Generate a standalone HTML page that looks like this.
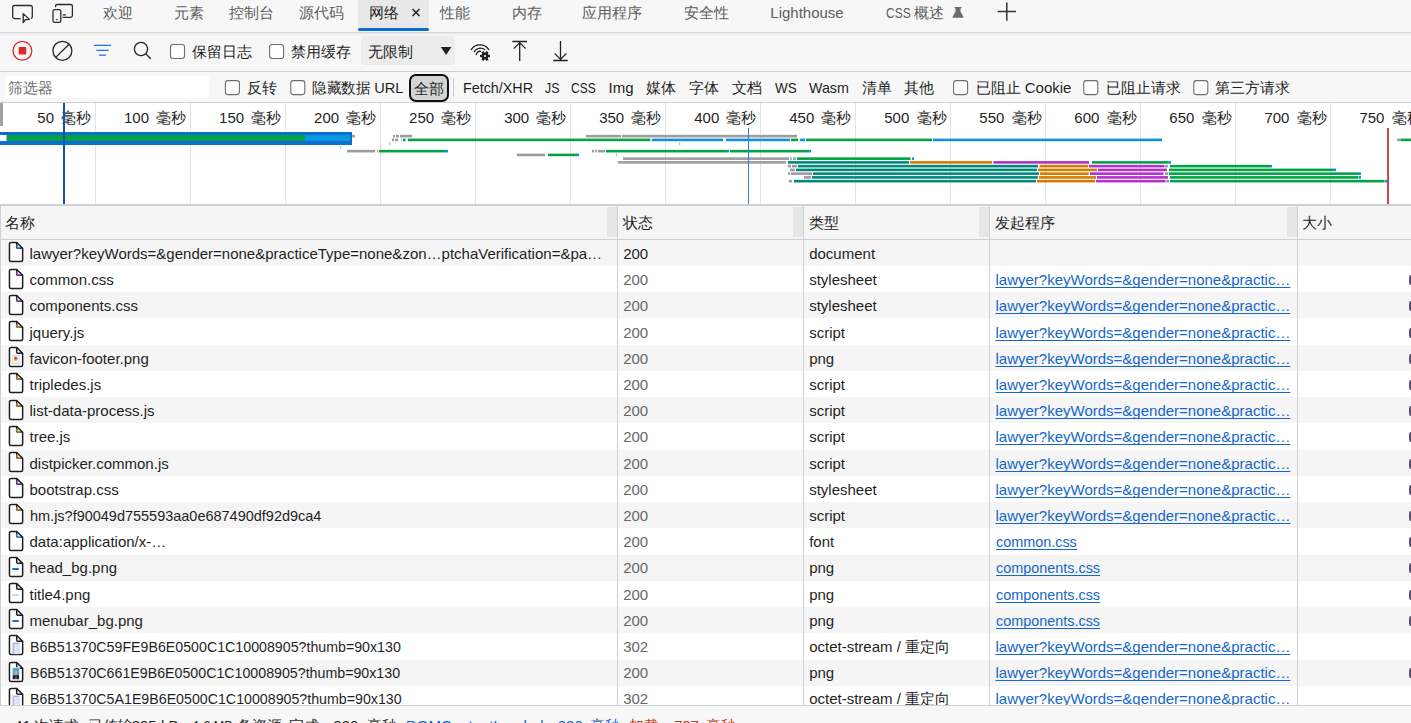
<!DOCTYPE html><html><head><meta charset="utf-8"><style>
html,body{margin:0;padding:0;width:1411px;height:723px;overflow:hidden;background:#fff;}
body{position:relative;font-family:'Liberation Sans', sans-serif;}
.t{position:absolute;white-space:pre;line-height:1;}
.r{position:absolute;}
svg{position:absolute;overflow:visible;}
a{color:inherit;}
</style></head><body>
<div class="r" style="left:0px;top:0px;width:1411.00px;height:32.00px;background:#f7f7f7;"></div>
<div class="r" style="left:0px;top:32px;width:1411.00px;height:1.00px;background:#d6d6d6;"></div>
<div class="r" style="left:0px;top:33px;width:1411.00px;height:3.00px;background:linear-gradient(#e9e9e9,#f7f7f7);"></div>
<div class="r" style="left:358px;top:0px;width:71.00px;height:28.00px;background:#e8e8e8;"></div>
<div class="r" style="left:358px;top:28px;width:71.00px;height:3.00px;background:#0a6ed1;border-radius:1.5px;"></div>
<svg style="left:0;top:0" width="80" height="34"><g fill="none" stroke="#2b2b2b" stroke-width="1.3"><path d="M20.7,18.6 H14.5 a1.8,1.8 0 0 1 -1.8,-1.8 V7.3 a1.8,1.8 0 0 1 1.8,-1.8 H30.5 a1.8,1.8 0 0 1 1.8,1.8 V16.8 a1.8,1.8 0 0 1 -1.2,1.7"/><path d="M23.2,13.6 L29.4,19.4 L25.4,19.6 L23.2,22.6 Z" stroke-linejoin="round"/><path d="M55.5,7.2 V6.3 a1.8,1.8 0 0 1 1.8,-1.8 H70.6 a1.8,1.8 0 0 1 1.8,1.8 V15.5 a1.8,1.8 0 0 1 -1.8,1.8 H62.5"/><rect x="53" y="9.6" width="7.8" height="12.8" rx="1.6"/><path d="M62.8,14.9 H65.8"/><path d="M56.2,19.6 H57.6"/></g></svg>
<div class="t" style="left:885.50px;top:4.72px;font-size:15px;color:#5e5e5e;transform:scaleX(0.8);transform-origin:0 0;">CSS</div>
<div class="t" style="left:102.70px;top:4.72px;font-size:15px;color:#5e5e5e;">欢迎</div>
<div class="t" style="left:174.00px;top:4.72px;font-size:15px;color:#5e5e5e;">元素</div>
<div class="t" style="left:228.80px;top:4.72px;font-size:15px;color:#5e5e5e;">控制台</div>
<div class="t" style="left:298.80px;top:4.72px;font-size:15px;color:#5e5e5e;">源代码</div>
<div class="t" style="left:369.20px;top:4.72px;font-size:15px;color:#1f1f1f;">网络</div>
<div class="t" style="left:440.40px;top:4.72px;font-size:15px;color:#5e5e5e;">性能</div>
<div class="t" style="left:511.50px;top:4.72px;font-size:15px;color:#5e5e5e;">内存</div>
<div class="t" style="left:582.20px;top:4.72px;font-size:15px;color:#5e5e5e;">应用程序</div>
<div class="t" style="left:684.00px;top:4.72px;font-size:15px;color:#5e5e5e;">安全性</div>
<div class="t" style="left:770.30px;top:4.72px;font-size:15px;color:#5e5e5e;">Lighthouse</div>
<div class="t" style="left:913.90px;top:4.72px;font-size:15px;color:#5e5e5e;">概述</div>
<svg style="left:0;top:0" width="1020" height="34"><g stroke="#1f1f1f" stroke-width="1.5" fill="none"><path d="M412.5,9 L419.5,16 M419.5,9 L412.5,16"/></g><path d="M954.5,7 h7 v1.2 h-1 v3.2 l3,5.6 a0.6,0.6 0 0 1 -0.5,0.8 h-10 a0.6,0.6 0 0 1 -0.5,-0.8 l3,-5.6 v-3.2 h-1 z" fill="#6b6b6b"/><g stroke="#333" stroke-width="1.5"><path d="M1006.8,2.5 V20.7 M997.7,11.6 H1016"/></g></svg>
<div class="r" style="left:0px;top:36px;width:1411.00px;height:35.00px;background:#f7f7f7;"></div>
<div class="r" style="left:0px;top:71px;width:1411.00px;height:1.00px;background:#cdd0d4;"></div>
<svg style="left:0;top:0" width="600" height="72"><circle cx="22.4" cy="50.8" r="9.4" fill="none" stroke="#dc2b24" stroke-width="1.3"/><rect x="18.7" y="47" width="7.6" height="7.6" rx="1" fill="#dc2b24"/><g fill="none" stroke="#262626" stroke-width="1.3"><circle cx="62.4" cy="50.8" r="9.5"/><path d="M69,44.2 L55.8,57.4"/><circle cx="141" cy="49" r="6.6"/><path d="M145.8,53.8 L150.8,59"/></g><g stroke="#1a73e8" stroke-width="1.3"><path d="M93.9,45.3 H111.1 M96.4,50.4 H108.6 M98.9,55.2 H106"/></g><rect x="170.5" y="44.5" width="14" height="14" rx="2.5" fill="#fff" stroke="#6e6e6e" stroke-width="1.1"/><rect x="269.6" y="44.5" width="14" height="14" rx="2.5" fill="#fff" stroke="#6e6e6e" stroke-width="1.1"/></svg>
<div class="t" style="left:192.10px;top:44.02px;font-size:15px;color:#1f1f1f;">保留日志</div>
<div class="t" style="left:290.70px;top:44.02px;font-size:15px;color:#1f1f1f;">禁用缓存</div>
<div class="r" style="left:361px;top:36.3px;width:94.00px;height:28.90px;background:#ececec;border-radius:3px;"></div>
<div class="t" style="left:368.20px;top:43.82px;font-size:15px;color:#1f1f1f;">无限制</div>
<svg style="left:0;top:0" width="600" height="72"><path d="M440.8,47 H451.4 L446.1,55 Z" fill="#1f1f1f"/><g fill="none" stroke="#1f1f1f" stroke-width="1.3" stroke-linecap="round"><path d="M471.2,49.6 A10.4,10.4 0 0 1 488.7,49.6"/><path d="M474.2,51.8 A7,7 0 0 1 484.6,49.6"/><path d="M476.3,54.5 A3.7,3.7 0 0 1 480.6,51.3"/></g><g transform="translate(485,56)" fill="#1f1f1f"><circle r="3.4"/><g><rect x="-1.2" y="-5" width="2.4" height="2.4" transform="rotate(30)"/><rect x="-1.2" y="-5" width="2.4" height="2.4" transform="rotate(90)"/><rect x="-1.2" y="-5" width="2.4" height="2.4" transform="rotate(150)"/><rect x="-1.2" y="-5" width="2.4" height="2.4" transform="rotate(210)"/><rect x="-1.2" y="-5" width="2.4" height="2.4" transform="rotate(270)"/><rect x="-1.2" y="-5" width="2.4" height="2.4" transform="rotate(330)"/></g><circle r="1.1" fill="#f7f7f7"/></g><g fill="none" stroke="#1f1f1f" stroke-width="1.3"><path d="M512.4,41.5 H527 M519.7,42.5 V61 M513.8,48.6 L519.7,42.6 L525.6,48.6"/><path d="M553.3,60.5 H567.7 M560.5,41 V59.5 M554.6,53.4 L560.5,59.4 L566.4,53.4"/></g></svg>
<div class="r" style="left:0px;top:72px;width:1411.00px;height:30.00px;background:#f7f7f7;"></div>
<div class="r" style="left:0px;top:102px;width:1411.00px;height:1.00px;background:#cdd0d4;"></div>
<div class="r" style="left:5px;top:76px;width:204.00px;height:21.50px;background:#ffffff;"></div>
<div class="t" style="left:8.20px;top:80.02px;font-size:15px;color:#6e6e6e;">筛选器</div>
<svg style="left:0;top:0" width="1411" height="102"><g fill="#fff" stroke="#6e6e6e" stroke-width="1.1">
<rect x="225.4" y="80.6" width="14" height="14" rx="2.5"/>
<rect x="290.8" y="80.6" width="14" height="14" rx="2.5"/>
<rect x="953.6" y="80.6" width="14" height="14" rx="2.5"/>
<rect x="1083.8" y="80.6" width="14" height="14" rx="2.5"/>
<rect x="1193.8" y="80.6" width="14" height="14" rx="2.5"/>
</g></svg>
<div class="t" style="left:246.70px;top:80.02px;font-size:15px;color:#1f1f1f;">反转</div>
<div class="t" style="left:312.00px;top:80.02px;font-size:15px;color:#1f1f1f;transform:scaleX(0.97);transform-origin:0 0;">隐藏数据 URL</div>
<div class="r" style="left:409px;top:74px;width:40.00px;height:28.00px;background:#d4d4d4;box-sizing:border-box;border:2.2px solid #111;border-radius:7px;"></div>
<div class="t" style="left:413.90px;top:81.02px;font-size:15px;color:#1f1f1f;">全部</div>
<div class="r" style="left:453px;top:77.5px;width:1.00px;height:18.50px;background:#cfcfcf;"></div>
<div class="t" style="left:462.50px;top:80.02px;font-size:15px;color:#1f1f1f;transform:scaleX(0.955);transform-origin:0 0;">Fetch/XHR</div>
<div class="t" style="left:544.50px;top:80.02px;font-size:15px;color:#1f1f1f;transform:scaleX(0.82);transform-origin:0 0;">JS</div>
<div class="t" style="left:570.70px;top:80.02px;font-size:15px;color:#1f1f1f;transform:scaleX(0.8);transform-origin:0 0;">CSS</div>
<div class="t" style="left:608.60px;top:80.02px;font-size:15px;color:#1f1f1f;">Img</div>
<div class="t" style="left:645.80px;top:80.02px;font-size:15px;color:#1f1f1f;">媒体</div>
<div class="t" style="left:688.80px;top:80.02px;font-size:15px;color:#1f1f1f;">字体</div>
<div class="t" style="left:731.90px;top:80.02px;font-size:15px;color:#1f1f1f;">文档</div>
<div class="t" style="left:774.50px;top:80.02px;font-size:15px;color:#1f1f1f;transform:scaleX(0.9);transform-origin:0 0;">WS</div>
<div class="t" style="left:808.90px;top:80.02px;font-size:15px;color:#1f1f1f;transform:scaleX(0.95);transform-origin:0 0;">Wasm</div>
<div class="t" style="left:861.60px;top:80.02px;font-size:15px;color:#1f1f1f;">清单</div>
<div class="t" style="left:904.20px;top:80.02px;font-size:15px;color:#1f1f1f;">其他</div>
<div class="t" style="left:975.60px;top:80.02px;font-size:15px;color:#1f1f1f;">已阻止 Cookie</div>
<div class="t" style="left:1106.20px;top:80.02px;font-size:15px;color:#1f1f1f;">已阻止请求</div>
<div class="t" style="left:1215.10px;top:80.02px;font-size:15px;color:#1f1f1f;">第三方请求</div>
<div class="r" style="left:0px;top:103px;width:1411.00px;height:101.00px;background:#ffffff;"></div>
<div class="r" style="left:0px;top:204px;width:1411.00px;height:1.50px;background:#cdd0d4;"></div>
<div class="r" style="left:95px;top:103px;width:1.00px;height:101.00px;background:#e3e3e3;"></div>
<div class="r" style="left:190px;top:103px;width:1.00px;height:101.00px;background:#e3e3e3;"></div>
<div class="r" style="left:285px;top:103px;width:1.00px;height:101.00px;background:#e3e3e3;"></div>
<div class="r" style="left:380px;top:103px;width:1.00px;height:101.00px;background:#e3e3e3;"></div>
<div class="r" style="left:475px;top:103px;width:1.00px;height:101.00px;background:#e3e3e3;"></div>
<div class="r" style="left:570px;top:103px;width:1.00px;height:101.00px;background:#e3e3e3;"></div>
<div class="r" style="left:665px;top:103px;width:1.00px;height:101.00px;background:#e3e3e3;"></div>
<div class="r" style="left:760px;top:103px;width:1.00px;height:101.00px;background:#e3e3e3;"></div>
<div class="r" style="left:855px;top:103px;width:1.00px;height:101.00px;background:#e3e3e3;"></div>
<div class="r" style="left:950px;top:103px;width:1.00px;height:101.00px;background:#e3e3e3;"></div>
<div class="r" style="left:1045px;top:103px;width:1.00px;height:101.00px;background:#e3e3e3;"></div>
<div class="r" style="left:1140px;top:103px;width:1.00px;height:101.00px;background:#e3e3e3;"></div>
<div class="r" style="left:1235px;top:103px;width:1.00px;height:101.00px;background:#e3e3e3;"></div>
<div class="r" style="left:1330px;top:103px;width:1.00px;height:101.00px;background:#e3e3e3;"></div>
<div class="r" style="left:0px;top:103px;width:3.00px;height:22.50px;background:#a0a0a0;"></div>
<div class="t" style="left:61.23px;top:110.02px;font-size:15px;color:#1f1f1f;">毫秒</div>
<div class="t" style="left:0;width:54.03px;text-align:right;top:110.02px;font-size:15px;color:#1f1f1f;">50</div>
<div class="t" style="left:156.26px;top:110.02px;font-size:15px;color:#1f1f1f;">毫秒</div>
<div class="t" style="left:0;width:149.06px;text-align:right;top:110.02px;font-size:15px;color:#1f1f1f;">100</div>
<div class="t" style="left:251.29px;top:110.02px;font-size:15px;color:#1f1f1f;">毫秒</div>
<div class="t" style="left:0;width:244.09px;text-align:right;top:110.02px;font-size:15px;color:#1f1f1f;">150</div>
<div class="t" style="left:346.32px;top:110.02px;font-size:15px;color:#1f1f1f;">毫秒</div>
<div class="t" style="left:0;width:339.12px;text-align:right;top:110.02px;font-size:15px;color:#1f1f1f;">200</div>
<div class="t" style="left:441.35px;top:110.02px;font-size:15px;color:#1f1f1f;">毫秒</div>
<div class="t" style="left:0;width:434.15px;text-align:right;top:110.02px;font-size:15px;color:#1f1f1f;">250</div>
<div class="t" style="left:536.38px;top:110.02px;font-size:15px;color:#1f1f1f;">毫秒</div>
<div class="t" style="left:0;width:529.18px;text-align:right;top:110.02px;font-size:15px;color:#1f1f1f;">300</div>
<div class="t" style="left:631.41px;top:110.02px;font-size:15px;color:#1f1f1f;">毫秒</div>
<div class="t" style="left:0;width:624.21px;text-align:right;top:110.02px;font-size:15px;color:#1f1f1f;">350</div>
<div class="t" style="left:726.44px;top:110.02px;font-size:15px;color:#1f1f1f;">毫秒</div>
<div class="t" style="left:0;width:719.24px;text-align:right;top:110.02px;font-size:15px;color:#1f1f1f;">400</div>
<div class="t" style="left:821.47px;top:110.02px;font-size:15px;color:#1f1f1f;">毫秒</div>
<div class="t" style="left:0;width:814.27px;text-align:right;top:110.02px;font-size:15px;color:#1f1f1f;">450</div>
<div class="t" style="left:916.50px;top:110.02px;font-size:15px;color:#1f1f1f;">毫秒</div>
<div class="t" style="left:0;width:909.30px;text-align:right;top:110.02px;font-size:15px;color:#1f1f1f;">500</div>
<div class="t" style="left:1011.53px;top:110.02px;font-size:15px;color:#1f1f1f;">毫秒</div>
<div class="t" style="left:0;width:1004.33px;text-align:right;top:110.02px;font-size:15px;color:#1f1f1f;">550</div>
<div class="t" style="left:1106.56px;top:110.02px;font-size:15px;color:#1f1f1f;">毫秒</div>
<div class="t" style="left:0;width:1099.36px;text-align:right;top:110.02px;font-size:15px;color:#1f1f1f;">600</div>
<div class="t" style="left:1201.59px;top:110.02px;font-size:15px;color:#1f1f1f;">毫秒</div>
<div class="t" style="left:0;width:1194.39px;text-align:right;top:110.02px;font-size:15px;color:#1f1f1f;">650</div>
<div class="t" style="left:1296.62px;top:110.02px;font-size:15px;color:#1f1f1f;">毫秒</div>
<div class="t" style="left:0;width:1289.42px;text-align:right;top:110.02px;font-size:15px;color:#1f1f1f;">700</div>
<div class="t" style="left:1391.65px;top:110.02px;font-size:15px;color:#1f1f1f;">毫秒</div>
<div class="t" style="left:0;width:1384.45px;text-align:right;top:110.02px;font-size:15px;color:#1f1f1f;">750</div>
<svg style="left:0;top:0" width="1411" height="204"><rect x="352" y="134.85" width="3.00" height="2.6" fill="#9d9d9d"/><rect x="393" y="134.85" width="2.00" height="2.6" fill="#9d9d9d"/><rect x="396" y="134.85" width="3.00" height="2.6" fill="#9d9d9d"/><rect x="400" y="134.85" width="12.00" height="2.6" fill="#9d9d9d"/><rect x="586" y="134.85" width="35.00" height="2.6" fill="#9d9d9d"/><rect x="622" y="134.85" width="175.00" height="2.6" fill="#9d9d9d"/><rect x="392" y="138.60" width="2.00" height="2.6" fill="#9d9d9d"/><rect x="395" y="138.60" width="3.00" height="2.6" fill="#9d9d9d"/><rect x="401" y="138.60" width="1.00" height="2.6" fill="#9fd2f5"/><rect x="403" y="138.60" width="2.50" height="2.6" fill="#00a346"/><rect x="408" y="138.60" width="242.40" height="2.6" fill="#00a346"/><rect x="652" y="138.60" width="71.00" height="2.6" fill="#0c93e0"/><rect x="726" y="138.60" width="64.00" height="2.6" fill="#0c93e0"/><rect x="791" y="138.60" width="7.00" height="2.6" fill="#00a346"/><rect x="800" y="138.60" width="5.00" height="2.6" fill="#0c93e0"/><rect x="806" y="138.60" width="126.00" height="2.6" fill="#00a346"/><rect x="933" y="138.60" width="229.00" height="2.6" fill="#0c93e0"/><rect x="1397" y="138.60" width="4.00" height="2.6" fill="#9d9d9d"/><rect x="1401" y="138.60" width="10.00" height="2.6" fill="#00a346"/><rect x="347" y="149.85" width="28.00" height="2.6" fill="#9d9d9d"/><rect x="377" y="149.85" width="1.00" height="2.6" fill="#9d9d9d"/><rect x="379" y="149.85" width="66.00" height="2.6" fill="#00a346"/><rect x="445" y="149.85" width="3.00" height="2.6" fill="#0c93e0"/><rect x="592" y="149.85" width="2.00" height="2.6" fill="#9d9d9d"/><rect x="595" y="149.85" width="2.00" height="2.6" fill="#9d9d9d"/><rect x="598" y="149.85" width="7.00" height="2.6" fill="#9d9d9d"/><rect x="606" y="149.85" width="121.00" height="2.6" fill="#00a346"/><rect x="727" y="149.85" width="2.00" height="2.6" fill="#0c93e0"/><rect x="730" y="149.85" width="78.00" height="2.6" fill="#00a346"/><rect x="808" y="149.85" width="3.00" height="2.6" fill="#0c93e0"/><rect x="517" y="153.60" width="28.00" height="2.6" fill="#9d9d9d"/><rect x="548" y="153.60" width="29.00" height="2.6" fill="#00a346"/><rect x="577" y="153.60" width="2.00" height="2.6" fill="#0c93e0"/><rect x="623" y="157.35" width="166.00" height="2.6" fill="#9d9d9d"/><rect x="790" y="157.35" width="2.00" height="2.6" fill="#9d9d9d"/><rect x="793" y="157.35" width="3.00" height="2.6" fill="#9d9d9d"/><rect x="797" y="157.35" width="113.50" height="2.6" fill="#00a346"/><rect x="912" y="157.35" width="2.00" height="2.6" fill="#0c93e0"/><rect x="618" y="161.10" width="168.00" height="2.6" fill="#9d9d9d"/><rect x="788" y="161.10" width="121.00" height="2.6" fill="#00897b"/><rect x="910" y="161.10" width="82.00" height="2.6" fill="#d77a00"/><rect x="993.5" y="161.10" width="95.50" height="2.6" fill="#b52fcb"/><rect x="1092" y="161.10" width="76.00" height="2.6" fill="#00a346"/><rect x="1168" y="161.10" width="3.00" height="2.6" fill="#0c93e0"/><rect x="788" y="164.85" width="3.00" height="2.6" fill="#9d9d9d"/><rect x="792" y="164.85" width="5.00" height="2.6" fill="#9d9d9d"/><rect x="798" y="164.85" width="240.00" height="2.6" fill="#00897b"/><rect x="1039.6" y="164.85" width="48.40" height="2.6" fill="#d77a00"/><rect x="1089" y="164.85" width="75.50" height="2.6" fill="#b52fcb"/><rect x="1165" y="164.85" width="3.00" height="2.6" fill="#9d9d9d"/><rect x="1170" y="164.85" width="100.00" height="2.6" fill="#00a346"/><rect x="1270" y="164.85" width="2.00" height="2.6" fill="#0c93e0"/><rect x="790" y="168.60" width="5.00" height="2.6" fill="#9d9d9d"/><rect x="796" y="168.60" width="241.00" height="2.6" fill="#00897b"/><rect x="1038" y="168.60" width="59.00" height="2.6" fill="#d77a00"/><rect x="1098" y="168.60" width="69.00" height="2.6" fill="#b52fcb"/><rect x="1169" y="168.60" width="164.00" height="2.6" fill="#00a346"/><rect x="1333" y="168.60" width="3.00" height="2.6" fill="#0c93e0"/><rect x="788" y="172.35" width="2.00" height="2.6" fill="#9d9d9d"/><rect x="791" y="172.35" width="21.00" height="2.6" fill="#9d9d9d"/><rect x="813" y="172.35" width="226.00" height="2.6" fill="#00897b"/><rect x="1040" y="172.35" width="48.70" height="2.6" fill="#d77a00"/><rect x="1090" y="172.35" width="73.50" height="2.6" fill="#b52fcb"/><rect x="1165" y="172.35" width="3.00" height="2.6" fill="#9d9d9d"/><rect x="1169" y="172.35" width="190.00" height="2.6" fill="#00a346"/><rect x="1359" y="172.35" width="2.00" height="2.6" fill="#0c93e0"/><rect x="804" y="176.10" width="7.00" height="2.6" fill="#9d9d9d"/><rect x="812" y="176.10" width="226.00" height="2.6" fill="#00897b"/><rect x="1039" y="176.10" width="57.00" height="2.6" fill="#d77a00"/><rect x="1097" y="176.10" width="71.00" height="2.6" fill="#b52fcb"/><rect x="1170" y="176.10" width="188.50" height="2.6" fill="#00a346"/><rect x="1359" y="176.10" width="2.00" height="2.6" fill="#0c93e0"/><rect x="789" y="179.85" width="3.00" height="2.6" fill="#9d9d9d"/><rect x="794" y="179.85" width="242.00" height="2.6" fill="#00897b"/><rect x="1037" y="179.85" width="58.00" height="2.6" fill="#d77a00"/><rect x="1096" y="179.85" width="69.50" height="2.6" fill="#b52fcb"/><rect x="1166" y="179.85" width="3.00" height="2.6" fill="#9d9d9d"/><rect x="1170" y="179.85" width="214.60" height="2.6" fill="#00a346"/><rect x="1385" y="179.85" width="2.00" height="2.6" fill="#0c93e0"/><rect x="389" y="142.15" width="1.3" height="3" fill="#9fd2f5"/><rect x="340" y="145.90" width="1.3" height="3" fill="#9fd2f5"/><rect x="616" y="153.40" width="1.3" height="3" fill="#9fd2f5"/><rect x="679" y="142.15" width="1.3" height="3" fill="#9fd2f5"/><rect x="790" y="157.15" width="1.3" height="3" fill="#9fd2f5"/></svg>
<div class="r" style="left:0px;top:132.2px;width:352.00px;height:12.60px;background:#0b6fd0;"></div>
<div class="r" style="left:0px;top:134.7px;width:6.00px;height:6.40px;background:#ffffff;"></div>
<div class="r" style="left:6px;top:134.7px;width:1.00px;height:6.40px;background:#b0b0b0;"></div>
<div class="r" style="left:7px;top:134.7px;width:297.70px;height:6.40px;background:#00a346;"></div>
<div class="r" style="left:304.7px;top:134.7px;width:45.30px;height:6.40px;background:#0a98e0;"></div>
<div class="r" style="left:63px;top:103px;width:2.00px;height:101.00px;background:#1a4fb5;"></div>
<div class="r" style="left:747.6px;top:128px;width:1.60px;height:76.00px;background:#2f7fe0;"></div>
<div class="r" style="left:1387px;top:128px;width:2.00px;height:76.00px;background:#c9494a;"></div>
<div class="r" style="left:0px;top:205.5px;width:1411.00px;height:33.50px;background:#f5f5f5;"></div>
<div class="r" style="left:0px;top:239px;width:1411.00px;height:1.00px;background:#cdd0d4;"></div>
<div class="r" style="left:607px;top:207px;width:10.00px;height:29.60px;background:#e6e6e6;"></div>
<div class="r" style="left:793px;top:207px;width:10.00px;height:29.60px;background:#e6e6e6;"></div>
<div class="r" style="left:979px;top:207px;width:10.00px;height:29.60px;background:#e6e6e6;"></div>
<div class="r" style="left:1287px;top:207px;width:10.00px;height:29.60px;background:#e6e6e6;"></div>
<div class="t" style="left:5.30px;top:214.93px;font-size:15px;color:#1f1f1f;">名称</div>
<div class="t" style="left:623.20px;top:214.93px;font-size:15px;color:#1f1f1f;">状态</div>
<div class="t" style="left:809.20px;top:214.93px;font-size:15px;color:#1f1f1f;">类型</div>
<div class="t" style="left:994.70px;top:214.93px;font-size:15px;color:#1f1f1f;">发起程序</div>
<div class="t" style="left:1302.20px;top:214.93px;font-size:15px;color:#1f1f1f;">大小</div>
<div class="r" style="left:0px;top:239.5px;width:1411.00px;height:26.25px;background:#f5f5f5;"></div>
<div class="r" style="left:0px;top:265.75px;width:1411.00px;height:26.25px;background:#ffffff;"></div>
<div class="r" style="left:0px;top:292.0px;width:1411.00px;height:26.25px;background:#f5f5f5;"></div>
<div class="r" style="left:0px;top:318.25px;width:1411.00px;height:26.25px;background:#ffffff;"></div>
<div class="r" style="left:0px;top:344.5px;width:1411.00px;height:26.25px;background:#f5f5f5;"></div>
<div class="r" style="left:0px;top:370.75px;width:1411.00px;height:26.25px;background:#ffffff;"></div>
<div class="r" style="left:0px;top:397.0px;width:1411.00px;height:26.25px;background:#f5f5f5;"></div>
<div class="r" style="left:0px;top:423.25px;width:1411.00px;height:26.25px;background:#ffffff;"></div>
<div class="r" style="left:0px;top:449.5px;width:1411.00px;height:26.25px;background:#f5f5f5;"></div>
<div class="r" style="left:0px;top:475.75px;width:1411.00px;height:26.25px;background:#ffffff;"></div>
<div class="r" style="left:0px;top:502.0px;width:1411.00px;height:26.25px;background:#f5f5f5;"></div>
<div class="r" style="left:0px;top:528.25px;width:1411.00px;height:26.25px;background:#ffffff;"></div>
<div class="r" style="left:0px;top:554.5px;width:1411.00px;height:26.25px;background:#f5f5f5;"></div>
<div class="r" style="left:0px;top:580.75px;width:1411.00px;height:26.25px;background:#ffffff;"></div>
<div class="r" style="left:0px;top:607.0px;width:1411.00px;height:26.25px;background:#f5f5f5;"></div>
<div class="r" style="left:0px;top:633.25px;width:1411.00px;height:26.25px;background:#ffffff;"></div>
<div class="r" style="left:0px;top:659.5px;width:1411.00px;height:26.25px;background:#f5f5f5;"></div>
<div class="r" style="left:0px;top:685.75px;width:1411.00px;height:26.25px;background:#ffffff;"></div>
<div class="r" style="left:0px;top:205.5px;width:1.20px;height:499.50px;background:#cdd0d4;"></div>
<div class="r" style="left:617px;top:205.5px;width:1.10px;height:499.50px;background:#cdd0d4;"></div>
<div class="r" style="left:803px;top:205.5px;width:1.10px;height:499.50px;background:#cdd0d4;"></div>
<div class="r" style="left:989px;top:205.5px;width:1.10px;height:499.50px;background:#cdd0d4;"></div>
<div class="r" style="left:1297px;top:205.5px;width:1.10px;height:499.50px;background:#cdd0d4;"></div>
<svg style="left:8px;top:242.40px" width="17" height="21" viewBox="0 0 17 21"><path d="M2.9,0.4 H8.7 L14.65,6.35 V17.9 A1.5,1.5 0 0 1 13.15,19.4 H2.95 A1.5,1.5 0 0 1 1.45,17.9 V1.9 A1.5,1.5 0 0 1 2.95,0.4 Z" fill="#fff" stroke="#fff" stroke-width="3" opacity="0.9"/><path d="M2.9,0.4 H8.7 L14.65,6.35 V17.9 A1.5,1.5 0 0 1 13.15,19.4 H2.95 A1.5,1.5 0 0 1 1.45,17.9 V1.9 A1.5,1.5 0 0 1 2.95,0.4 Z" fill="#fefefe" stroke="#1e1e1e" stroke-width="1.5"/><path d="M8.7,0.4 V5.1 A1.25,1.25 0 0 0 9.95,6.35 H14.65" fill="none" stroke="#1e1e1e" stroke-width="1.5"/><path d="M8.7,2.4 V5.1 A1.25,1.25 0 0 0 9.95,6.35 H13.4" fill="none" stroke="#2f6fd6" stroke-width="1.2" opacity="0.7"/></svg>
<div class="t" style="left:29.50px;top:246.00px;font-size:15px;color:#1f1f1f;">lawyer?keyWords=&gender=none&practiceType=none&zon…ptchaVerification=&pa…</div>
<div class="t" style="left:623.20px;top:246.00px;font-size:15px;color:#1f1f1f;">200</div>
<div class="t" style="left:809.20px;top:246.00px;font-size:15px;color:#1f1f1f;">document</div>
<svg style="left:8px;top:268.60px" width="17" height="21" viewBox="0 0 17 21"><path d="M2.9,0.4 H8.7 L14.65,6.35 V17.9 A1.5,1.5 0 0 1 13.15,19.4 H2.95 A1.5,1.5 0 0 1 1.45,17.9 V1.9 A1.5,1.5 0 0 1 2.95,0.4 Z" fill="#fff" stroke="#fff" stroke-width="3" opacity="0.9"/><path d="M2.9,0.4 H8.7 L14.65,6.35 V17.9 A1.5,1.5 0 0 1 13.15,19.4 H2.95 A1.5,1.5 0 0 1 1.45,17.9 V1.9 A1.5,1.5 0 0 1 2.95,0.4 Z" fill="#fefefe" stroke="#1e1e1e" stroke-width="1.5"/><path d="M8.7,0.4 V5.1 A1.25,1.25 0 0 0 9.95,6.35 H14.65" fill="none" stroke="#1e1e1e" stroke-width="1.5"/><path d="M8.7,2.4 V5.1 A1.25,1.25 0 0 0 9.95,6.35 H13.4" fill="none" stroke="#8a3ad6" stroke-width="1.2" opacity="0.7"/></svg>
<div class="t" style="left:29.50px;top:272.00px;font-size:15px;color:#1f1f1f;">common.css</div>
<div class="t" style="left:623.20px;top:272.00px;font-size:15px;color:#666666;">200</div>
<div class="t" style="left:809.20px;top:272.00px;font-size:15px;color:#1f1f1f;">stylesheet</div>
<div class="t" style="left:995.5px;top:272.00px;font-size:15px;color:#1567c8;text-decoration:underline;text-decoration-skip-ink:none;text-underline-offset:2px;">lawyer?keyWords=&gender=none&practic…</div>
<div class="r" style="left:1409.3px;top:275.27px;width:3px;height:9.6px;border-radius:50%/40%;background:#4a3f5a;opacity:0.9"></div>
<svg style="left:8px;top:294.80px" width="17" height="21" viewBox="0 0 17 21"><path d="M2.9,0.4 H8.7 L14.65,6.35 V17.9 A1.5,1.5 0 0 1 13.15,19.4 H2.95 A1.5,1.5 0 0 1 1.45,17.9 V1.9 A1.5,1.5 0 0 1 2.95,0.4 Z" fill="#fff" stroke="#fff" stroke-width="3" opacity="0.9"/><path d="M2.9,0.4 H8.7 L14.65,6.35 V17.9 A1.5,1.5 0 0 1 13.15,19.4 H2.95 A1.5,1.5 0 0 1 1.45,17.9 V1.9 A1.5,1.5 0 0 1 2.95,0.4 Z" fill="#fefefe" stroke="#1e1e1e" stroke-width="1.5"/><path d="M8.7,0.4 V5.1 A1.25,1.25 0 0 0 9.95,6.35 H14.65" fill="none" stroke="#1e1e1e" stroke-width="1.5"/><path d="M8.7,2.4 V5.1 A1.25,1.25 0 0 0 9.95,6.35 H13.4" fill="none" stroke="#8a3ad6" stroke-width="1.2" opacity="0.7"/></svg>
<div class="t" style="left:29.50px;top:298.00px;font-size:15px;color:#1f1f1f;">components.css</div>
<div class="t" style="left:623.20px;top:298.00px;font-size:15px;color:#666666;">200</div>
<div class="t" style="left:809.20px;top:298.00px;font-size:15px;color:#1f1f1f;">stylesheet</div>
<div class="t" style="left:995.5px;top:298.00px;font-size:15px;color:#1567c8;text-decoration:underline;text-decoration-skip-ink:none;text-underline-offset:2px;">lawyer?keyWords=&gender=none&practic…</div>
<div class="r" style="left:1409.3px;top:301.27px;width:3px;height:9.6px;border-radius:50%/40%;background:#4a3f5a;opacity:0.9"></div>
<svg style="left:8px;top:321.00px" width="17" height="21" viewBox="0 0 17 21"><path d="M2.9,0.4 H8.7 L14.65,6.35 V17.9 A1.5,1.5 0 0 1 13.15,19.4 H2.95 A1.5,1.5 0 0 1 1.45,17.9 V1.9 A1.5,1.5 0 0 1 2.95,0.4 Z" fill="#fff" stroke="#fff" stroke-width="3" opacity="0.9"/><path d="M2.9,0.4 H8.7 L14.65,6.35 V17.9 A1.5,1.5 0 0 1 13.15,19.4 H2.95 A1.5,1.5 0 0 1 1.45,17.9 V1.9 A1.5,1.5 0 0 1 2.95,0.4 Z" fill="#fefefe" stroke="#1e1e1e" stroke-width="1.5"/><path d="M8.7,0.4 V5.1 A1.25,1.25 0 0 0 9.95,6.35 H14.65" fill="none" stroke="#1e1e1e" stroke-width="1.5"/><path d="M8.7,2.4 V5.1 A1.25,1.25 0 0 0 9.95,6.35 H13.4" fill="none" stroke="#d39a1a" stroke-width="1.2" opacity="0.7"/></svg>
<div class="t" style="left:29.50px;top:325.00px;font-size:15px;color:#1f1f1f;">jquery.js</div>
<div class="t" style="left:623.20px;top:325.00px;font-size:15px;color:#666666;">200</div>
<div class="t" style="left:809.20px;top:325.00px;font-size:15px;color:#1f1f1f;">script</div>
<div class="t" style="left:995.5px;top:325.00px;font-size:15px;color:#1567c8;text-decoration:underline;text-decoration-skip-ink:none;text-underline-offset:2px;">lawyer?keyWords=&gender=none&practic…</div>
<div class="r" style="left:1409.3px;top:328.27px;width:3px;height:9.6px;border-radius:50%/40%;background:#4a3f5a;opacity:0.9"></div>
<svg style="left:8px;top:347.20px" width="17" height="21" viewBox="0 0 17 21"><path d="M2.9,0.4 H8.7 L14.65,6.35 V17.9 A1.5,1.5 0 0 1 13.15,19.4 H2.95 A1.5,1.5 0 0 1 1.45,17.9 V1.9 A1.5,1.5 0 0 1 2.95,0.4 Z" fill="#fff" stroke="#fff" stroke-width="3" opacity="0.9"/><path d="M2.9,0.4 H8.7 L14.65,6.35 V17.9 A1.5,1.5 0 0 1 13.15,19.4 H2.95 A1.5,1.5 0 0 1 1.45,17.9 V1.9 A1.5,1.5 0 0 1 2.95,0.4 Z" fill="#fefefe" stroke="#1e1e1e" stroke-width="1.5"/><path d="M8.7,0.4 V5.1 A1.25,1.25 0 0 0 9.95,6.35 H14.65" fill="none" stroke="#1e1e1e" stroke-width="1.5"/><rect x="4.3" y="8.3" width="6.8" height="8.2" fill="#fff" stroke="#c9cdd6" stroke-width="0.9"/><circle cx="7.7" cy="11.3" r="1.7" fill="#d5402c"/><path d="M5.6,12.3 Q7.7,16.2 9.8,12.3 Z" fill="#e7b04a"/></svg>
<div class="t" style="left:29.50px;top:351.00px;font-size:15px;color:#1f1f1f;">favicon-footer.png</div>
<div class="t" style="left:623.20px;top:351.00px;font-size:15px;color:#666666;">200</div>
<div class="t" style="left:809.20px;top:351.00px;font-size:15px;color:#1f1f1f;">png</div>
<div class="t" style="left:995.5px;top:351.00px;font-size:15px;color:#1567c8;text-decoration:underline;text-decoration-skip-ink:none;text-underline-offset:2px;">lawyer?keyWords=&gender=none&practic…</div>
<div class="r" style="left:1409.3px;top:354.27px;width:3px;height:9.6px;border-radius:50%/40%;background:#4a3f5a;opacity:0.9"></div>
<svg style="left:8px;top:373.40px" width="17" height="21" viewBox="0 0 17 21"><path d="M2.9,0.4 H8.7 L14.65,6.35 V17.9 A1.5,1.5 0 0 1 13.15,19.4 H2.95 A1.5,1.5 0 0 1 1.45,17.9 V1.9 A1.5,1.5 0 0 1 2.95,0.4 Z" fill="#fff" stroke="#fff" stroke-width="3" opacity="0.9"/><path d="M2.9,0.4 H8.7 L14.65,6.35 V17.9 A1.5,1.5 0 0 1 13.15,19.4 H2.95 A1.5,1.5 0 0 1 1.45,17.9 V1.9 A1.5,1.5 0 0 1 2.95,0.4 Z" fill="#fefefe" stroke="#1e1e1e" stroke-width="1.5"/><path d="M8.7,0.4 V5.1 A1.25,1.25 0 0 0 9.95,6.35 H14.65" fill="none" stroke="#1e1e1e" stroke-width="1.5"/><path d="M8.7,2.4 V5.1 A1.25,1.25 0 0 0 9.95,6.35 H13.4" fill="none" stroke="#d39a1a" stroke-width="1.2" opacity="0.7"/></svg>
<div class="t" style="left:29.50px;top:377.00px;font-size:15px;color:#1f1f1f;">tripledes.js</div>
<div class="t" style="left:623.20px;top:377.00px;font-size:15px;color:#666666;">200</div>
<div class="t" style="left:809.20px;top:377.00px;font-size:15px;color:#1f1f1f;">script</div>
<div class="t" style="left:995.5px;top:377.00px;font-size:15px;color:#1567c8;text-decoration:underline;text-decoration-skip-ink:none;text-underline-offset:2px;">lawyer?keyWords=&gender=none&practic…</div>
<div class="r" style="left:1409.3px;top:380.27px;width:3px;height:9.6px;border-radius:50%/40%;background:#4a3f5a;opacity:0.9"></div>
<svg style="left:8px;top:399.60px" width="17" height="21" viewBox="0 0 17 21"><path d="M2.9,0.4 H8.7 L14.65,6.35 V17.9 A1.5,1.5 0 0 1 13.15,19.4 H2.95 A1.5,1.5 0 0 1 1.45,17.9 V1.9 A1.5,1.5 0 0 1 2.95,0.4 Z" fill="#fff" stroke="#fff" stroke-width="3" opacity="0.9"/><path d="M2.9,0.4 H8.7 L14.65,6.35 V17.9 A1.5,1.5 0 0 1 13.15,19.4 H2.95 A1.5,1.5 0 0 1 1.45,17.9 V1.9 A1.5,1.5 0 0 1 2.95,0.4 Z" fill="#fefefe" stroke="#1e1e1e" stroke-width="1.5"/><path d="M8.7,0.4 V5.1 A1.25,1.25 0 0 0 9.95,6.35 H14.65" fill="none" stroke="#1e1e1e" stroke-width="1.5"/><path d="M8.7,2.4 V5.1 A1.25,1.25 0 0 0 9.95,6.35 H13.4" fill="none" stroke="#d39a1a" stroke-width="1.2" opacity="0.7"/></svg>
<div class="t" style="left:29.50px;top:403.00px;font-size:15px;color:#1f1f1f;">list-data-process.js</div>
<div class="t" style="left:623.20px;top:403.00px;font-size:15px;color:#666666;">200</div>
<div class="t" style="left:809.20px;top:403.00px;font-size:15px;color:#1f1f1f;">script</div>
<div class="t" style="left:995.5px;top:403.00px;font-size:15px;color:#1567c8;text-decoration:underline;text-decoration-skip-ink:none;text-underline-offset:2px;">lawyer?keyWords=&gender=none&practic…</div>
<div class="r" style="left:1409.3px;top:406.27px;width:3px;height:9.6px;border-radius:50%/40%;background:#4a3f5a;opacity:0.9"></div>
<svg style="left:8px;top:425.80px" width="17" height="21" viewBox="0 0 17 21"><path d="M2.9,0.4 H8.7 L14.65,6.35 V17.9 A1.5,1.5 0 0 1 13.15,19.4 H2.95 A1.5,1.5 0 0 1 1.45,17.9 V1.9 A1.5,1.5 0 0 1 2.95,0.4 Z" fill="#fff" stroke="#fff" stroke-width="3" opacity="0.9"/><path d="M2.9,0.4 H8.7 L14.65,6.35 V17.9 A1.5,1.5 0 0 1 13.15,19.4 H2.95 A1.5,1.5 0 0 1 1.45,17.9 V1.9 A1.5,1.5 0 0 1 2.95,0.4 Z" fill="#fefefe" stroke="#1e1e1e" stroke-width="1.5"/><path d="M8.7,0.4 V5.1 A1.25,1.25 0 0 0 9.95,6.35 H14.65" fill="none" stroke="#1e1e1e" stroke-width="1.5"/><path d="M8.7,2.4 V5.1 A1.25,1.25 0 0 0 9.95,6.35 H13.4" fill="none" stroke="#d39a1a" stroke-width="1.2" opacity="0.7"/></svg>
<div class="t" style="left:29.50px;top:429.00px;font-size:15px;color:#1f1f1f;">tree.js</div>
<div class="t" style="left:623.20px;top:429.00px;font-size:15px;color:#666666;">200</div>
<div class="t" style="left:809.20px;top:429.00px;font-size:15px;color:#1f1f1f;">script</div>
<div class="t" style="left:995.5px;top:429.00px;font-size:15px;color:#1567c8;text-decoration:underline;text-decoration-skip-ink:none;text-underline-offset:2px;">lawyer?keyWords=&gender=none&practic…</div>
<div class="r" style="left:1409.3px;top:432.27px;width:3px;height:9.6px;border-radius:50%/40%;background:#4a3f5a;opacity:0.9"></div>
<svg style="left:8px;top:452.00px" width="17" height="21" viewBox="0 0 17 21"><path d="M2.9,0.4 H8.7 L14.65,6.35 V17.9 A1.5,1.5 0 0 1 13.15,19.4 H2.95 A1.5,1.5 0 0 1 1.45,17.9 V1.9 A1.5,1.5 0 0 1 2.95,0.4 Z" fill="#fff" stroke="#fff" stroke-width="3" opacity="0.9"/><path d="M2.9,0.4 H8.7 L14.65,6.35 V17.9 A1.5,1.5 0 0 1 13.15,19.4 H2.95 A1.5,1.5 0 0 1 1.45,17.9 V1.9 A1.5,1.5 0 0 1 2.95,0.4 Z" fill="#fefefe" stroke="#1e1e1e" stroke-width="1.5"/><path d="M8.7,0.4 V5.1 A1.25,1.25 0 0 0 9.95,6.35 H14.65" fill="none" stroke="#1e1e1e" stroke-width="1.5"/><path d="M8.7,2.4 V5.1 A1.25,1.25 0 0 0 9.95,6.35 H13.4" fill="none" stroke="#d39a1a" stroke-width="1.2" opacity="0.7"/></svg>
<div class="t" style="left:29.50px;top:456.00px;font-size:15px;color:#1f1f1f;">distpicker.common.js</div>
<div class="t" style="left:623.20px;top:456.00px;font-size:15px;color:#666666;">200</div>
<div class="t" style="left:809.20px;top:456.00px;font-size:15px;color:#1f1f1f;">script</div>
<div class="t" style="left:995.5px;top:456.00px;font-size:15px;color:#1567c8;text-decoration:underline;text-decoration-skip-ink:none;text-underline-offset:2px;">lawyer?keyWords=&gender=none&practic…</div>
<div class="r" style="left:1409.3px;top:459.27px;width:3px;height:9.6px;border-radius:50%/40%;background:#4a3f5a;opacity:0.9"></div>
<svg style="left:8px;top:478.20px" width="17" height="21" viewBox="0 0 17 21"><path d="M2.9,0.4 H8.7 L14.65,6.35 V17.9 A1.5,1.5 0 0 1 13.15,19.4 H2.95 A1.5,1.5 0 0 1 1.45,17.9 V1.9 A1.5,1.5 0 0 1 2.95,0.4 Z" fill="#fff" stroke="#fff" stroke-width="3" opacity="0.9"/><path d="M2.9,0.4 H8.7 L14.65,6.35 V17.9 A1.5,1.5 0 0 1 13.15,19.4 H2.95 A1.5,1.5 0 0 1 1.45,17.9 V1.9 A1.5,1.5 0 0 1 2.95,0.4 Z" fill="#fefefe" stroke="#1e1e1e" stroke-width="1.5"/><path d="M8.7,0.4 V5.1 A1.25,1.25 0 0 0 9.95,6.35 H14.65" fill="none" stroke="#1e1e1e" stroke-width="1.5"/><path d="M8.7,2.4 V5.1 A1.25,1.25 0 0 0 9.95,6.35 H13.4" fill="none" stroke="#8a3ad6" stroke-width="1.2" opacity="0.7"/></svg>
<div class="t" style="left:29.50px;top:482.00px;font-size:15px;color:#1f1f1f;">bootstrap.css</div>
<div class="t" style="left:623.20px;top:482.00px;font-size:15px;color:#666666;">200</div>
<div class="t" style="left:809.20px;top:482.00px;font-size:15px;color:#1f1f1f;">stylesheet</div>
<div class="t" style="left:995.5px;top:482.00px;font-size:15px;color:#1567c8;text-decoration:underline;text-decoration-skip-ink:none;text-underline-offset:2px;">lawyer?keyWords=&gender=none&practic…</div>
<div class="r" style="left:1409.3px;top:485.27px;width:3px;height:9.6px;border-radius:50%/40%;background:#4a3f5a;opacity:0.9"></div>
<svg style="left:8px;top:504.40px" width="17" height="21" viewBox="0 0 17 21"><path d="M2.9,0.4 H8.7 L14.65,6.35 V17.9 A1.5,1.5 0 0 1 13.15,19.4 H2.95 A1.5,1.5 0 0 1 1.45,17.9 V1.9 A1.5,1.5 0 0 1 2.95,0.4 Z" fill="#fff" stroke="#fff" stroke-width="3" opacity="0.9"/><path d="M2.9,0.4 H8.7 L14.65,6.35 V17.9 A1.5,1.5 0 0 1 13.15,19.4 H2.95 A1.5,1.5 0 0 1 1.45,17.9 V1.9 A1.5,1.5 0 0 1 2.95,0.4 Z" fill="#fefefe" stroke="#1e1e1e" stroke-width="1.5"/><path d="M8.7,0.4 V5.1 A1.25,1.25 0 0 0 9.95,6.35 H14.65" fill="none" stroke="#1e1e1e" stroke-width="1.5"/><path d="M8.7,2.4 V5.1 A1.25,1.25 0 0 0 9.95,6.35 H13.4" fill="none" stroke="#d39a1a" stroke-width="1.2" opacity="0.7"/></svg>
<div class="t" style="left:29.50px;top:508.00px;font-size:15px;color:#1f1f1f;transform:scaleX(0.965);transform-origin:0 0;">hm.js?f90049d755593aa0e687490df92d9ca4</div>
<div class="t" style="left:623.20px;top:508.00px;font-size:15px;color:#666666;">200</div>
<div class="t" style="left:809.20px;top:508.00px;font-size:15px;color:#1f1f1f;">script</div>
<div class="t" style="left:995.5px;top:508.00px;font-size:15px;color:#1567c8;text-decoration:underline;text-decoration-skip-ink:none;text-underline-offset:2px;">lawyer?keyWords=&gender=none&practic…</div>
<div class="r" style="left:1409.3px;top:511.28px;width:3px;height:9.6px;border-radius:50%/40%;background:#4a3f5a;opacity:0.9"></div>
<svg style="left:8px;top:530.60px" width="17" height="21" viewBox="0 0 17 21"><path d="M2.9,0.4 H8.7 L14.65,6.35 V17.9 A1.5,1.5 0 0 1 13.15,19.4 H2.95 A1.5,1.5 0 0 1 1.45,17.9 V1.9 A1.5,1.5 0 0 1 2.95,0.4 Z" fill="#fff" stroke="#fff" stroke-width="3" opacity="0.9"/><path d="M2.9,0.4 H8.7 L14.65,6.35 V17.9 A1.5,1.5 0 0 1 13.15,19.4 H2.95 A1.5,1.5 0 0 1 1.45,17.9 V1.9 A1.5,1.5 0 0 1 2.95,0.4 Z" fill="#fefefe" stroke="#1e1e1e" stroke-width="1.5"/><path d="M8.7,0.4 V5.1 A1.25,1.25 0 0 0 9.95,6.35 H14.65" fill="none" stroke="#1e1e1e" stroke-width="1.5"/><path d="M8.7,2.4 V5.1 A1.25,1.25 0 0 0 9.95,6.35 H13.4" fill="none" stroke="#58b0e8" stroke-width="1.2" opacity="0.7"/></svg>
<div class="t" style="left:29.50px;top:534.00px;font-size:15px;color:#1f1f1f;">data<span>:</span>application/x-…</div>
<div class="t" style="left:623.20px;top:534.00px;font-size:15px;color:#666666;">200</div>
<div class="t" style="left:809.20px;top:534.00px;font-size:15px;color:#1f1f1f;">font</div>
<div class="t" style="left:995.5px;top:534.00px;font-size:15px;color:#1567c8;text-decoration:underline;text-decoration-skip-ink:none;text-underline-offset:2px;transform:scaleX(0.96);transform-origin:0 0;">common.css</div>
<div class="r" style="left:1409.3px;top:537.28px;width:3px;height:9.6px;border-radius:50%/40%;background:#4a3f5a;opacity:0.9"></div>
<svg style="left:8px;top:556.80px" width="17" height="21" viewBox="0 0 17 21"><path d="M2.9,0.4 H8.7 L14.65,6.35 V17.9 A1.5,1.5 0 0 1 13.15,19.4 H2.95 A1.5,1.5 0 0 1 1.45,17.9 V1.9 A1.5,1.5 0 0 1 2.95,0.4 Z" fill="#fff" stroke="#fff" stroke-width="3" opacity="0.9"/><path d="M2.9,0.4 H8.7 L14.65,6.35 V17.9 A1.5,1.5 0 0 1 13.15,19.4 H2.95 A1.5,1.5 0 0 1 1.45,17.9 V1.9 A1.5,1.5 0 0 1 2.95,0.4 Z" fill="#fefefe" stroke="#1e1e1e" stroke-width="1.5"/><path d="M8.7,0.4 V5.1 A1.25,1.25 0 0 0 9.95,6.35 H14.65" fill="none" stroke="#1e1e1e" stroke-width="1.5"/><rect x="4.3" y="11.1" width="6.6" height="1.9" rx="0.4" fill="#1b72d6"/></svg>
<div class="t" style="left:29.50px;top:560.00px;font-size:15px;color:#1f1f1f;">head_bg.png</div>
<div class="t" style="left:623.20px;top:560.00px;font-size:15px;color:#666666;">200</div>
<div class="t" style="left:809.20px;top:560.00px;font-size:15px;color:#1f1f1f;">png</div>
<div class="t" style="left:995.5px;top:560.00px;font-size:15px;color:#1567c8;text-decoration:underline;text-decoration-skip-ink:none;text-underline-offset:2px;transform:scaleX(0.96);transform-origin:0 0;">components.css</div>
<div class="r" style="left:1409.3px;top:563.28px;width:3px;height:9.6px;border-radius:50%/40%;background:#4a3f5a;opacity:0.9"></div>
<svg style="left:8px;top:583.00px" width="17" height="21" viewBox="0 0 17 21"><path d="M2.9,0.4 H8.7 L14.65,6.35 V17.9 A1.5,1.5 0 0 1 13.15,19.4 H2.95 A1.5,1.5 0 0 1 1.45,17.9 V1.9 A1.5,1.5 0 0 1 2.95,0.4 Z" fill="#fff" stroke="#fff" stroke-width="3" opacity="0.9"/><path d="M2.9,0.4 H8.7 L14.65,6.35 V17.9 A1.5,1.5 0 0 1 13.15,19.4 H2.95 A1.5,1.5 0 0 1 1.45,17.9 V1.9 A1.5,1.5 0 0 1 2.95,0.4 Z" fill="#fefefe" stroke="#1e1e1e" stroke-width="1.5"/><path d="M8.7,0.4 V5.1 A1.25,1.25 0 0 0 9.95,6.35 H14.65" fill="none" stroke="#1e1e1e" stroke-width="1.5"/><rect x="4.3" y="11.1" width="6.6" height="1.9" rx="0.4" fill="#cdd5e1"/></svg>
<div class="t" style="left:29.50px;top:587.00px;font-size:15px;color:#1f1f1f;">title4.png</div>
<div class="t" style="left:623.20px;top:587.00px;font-size:15px;color:#666666;">200</div>
<div class="t" style="left:809.20px;top:587.00px;font-size:15px;color:#1f1f1f;">png</div>
<div class="t" style="left:995.5px;top:587.00px;font-size:15px;color:#1567c8;text-decoration:underline;text-decoration-skip-ink:none;text-underline-offset:2px;transform:scaleX(0.96);transform-origin:0 0;">components.css</div>
<div class="r" style="left:1409.3px;top:590.28px;width:3px;height:9.6px;border-radius:50%/40%;background:#4a3f5a;opacity:0.9"></div>
<svg style="left:8px;top:609.20px" width="17" height="21" viewBox="0 0 17 21"><path d="M2.9,0.4 H8.7 L14.65,6.35 V17.9 A1.5,1.5 0 0 1 13.15,19.4 H2.95 A1.5,1.5 0 0 1 1.45,17.9 V1.9 A1.5,1.5 0 0 1 2.95,0.4 Z" fill="#fff" stroke="#fff" stroke-width="3" opacity="0.9"/><path d="M2.9,0.4 H8.7 L14.65,6.35 V17.9 A1.5,1.5 0 0 1 13.15,19.4 H2.95 A1.5,1.5 0 0 1 1.45,17.9 V1.9 A1.5,1.5 0 0 1 2.95,0.4 Z" fill="#fefefe" stroke="#1e1e1e" stroke-width="1.5"/><path d="M8.7,0.4 V5.1 A1.25,1.25 0 0 0 9.95,6.35 H14.65" fill="none" stroke="#1e1e1e" stroke-width="1.5"/><rect x="4.3" y="11.1" width="6.6" height="1.9" rx="0.4" fill="#1b72d6"/></svg>
<div class="t" style="left:29.50px;top:613.00px;font-size:15px;color:#1f1f1f;">menubar_bg.png</div>
<div class="t" style="left:623.20px;top:613.00px;font-size:15px;color:#666666;">200</div>
<div class="t" style="left:809.20px;top:613.00px;font-size:15px;color:#1f1f1f;">png</div>
<div class="t" style="left:995.5px;top:613.00px;font-size:15px;color:#1567c8;text-decoration:underline;text-decoration-skip-ink:none;text-underline-offset:2px;transform:scaleX(0.96);transform-origin:0 0;">components.css</div>
<div class="r" style="left:1409.3px;top:616.28px;width:3px;height:9.6px;border-radius:50%/40%;background:#4a3f5a;opacity:0.9"></div>
<svg style="left:8px;top:635.40px" width="17" height="21" viewBox="0 0 17 21"><path d="M2.9,0.4 H8.7 L14.65,6.35 V17.9 A1.5,1.5 0 0 1 13.15,19.4 H2.95 A1.5,1.5 0 0 1 1.45,17.9 V1.9 A1.5,1.5 0 0 1 2.95,0.4 Z" fill="#fff" stroke="#fff" stroke-width="3" opacity="0.9"/><path d="M2.9,0.4 H8.7 L14.65,6.35 V17.9 A1.5,1.5 0 0 1 13.15,19.4 H2.95 A1.5,1.5 0 0 1 1.45,17.9 V1.9 A1.5,1.5 0 0 1 2.95,0.4 Z" fill="#fefefe" stroke="#1e1e1e" stroke-width="1.5"/><path d="M8.7,0.4 V5.1 A1.25,1.25 0 0 0 9.95,6.35 H14.65" fill="none" stroke="#1e1e1e" stroke-width="1.5"/><rect x="4.2" y="7.4" width="7.4" height="11.4" fill="#fff" stroke="#d7dbe3" stroke-width="0.7"/><path d="M5.3,18.6 V8.7 H11.2" fill="none" stroke="#9a9a9a" stroke-width="0.9"/><rect x="5.9" y="9.3" width="5.2" height="9.2" fill="#d3e2fa"/><path d="M6.6,14.2 L8.6,12.4 M7.2,16.4 L10.4,16.4" stroke="#fff" stroke-width="0.6"/></svg>
<div class="t" style="left:29.50px;top:639.00px;font-size:15px;color:#1f1f1f;transform:scaleX(0.947);transform-origin:0 0;">B6B51370C59FE9B6E0500C1C10008905?thumb=90x130</div>
<div class="t" style="left:623.20px;top:639.00px;font-size:15px;color:#666666;">302</div>
<div class="t" style="left:809.20px;top:639.00px;font-size:15px;color:#1f1f1f;">octet-stream / 重定向</div>
<div class="t" style="left:995.5px;top:639.00px;font-size:15px;color:#1567c8;text-decoration:underline;text-decoration-skip-ink:none;text-underline-offset:2px;">lawyer?keyWords=&gender=none&practic…</div>
<svg style="left:8px;top:661.60px" width="17" height="21" viewBox="0 0 17 21"><path d="M2.9,0.4 H8.7 L14.65,6.35 V17.9 A1.5,1.5 0 0 1 13.15,19.4 H2.95 A1.5,1.5 0 0 1 1.45,17.9 V1.9 A1.5,1.5 0 0 1 2.95,0.4 Z" fill="#fff" stroke="#fff" stroke-width="3" opacity="0.9"/><path d="M2.9,0.4 H8.7 L14.65,6.35 V17.9 A1.5,1.5 0 0 1 13.15,19.4 H2.95 A1.5,1.5 0 0 1 1.45,17.9 V1.9 A1.5,1.5 0 0 1 2.95,0.4 Z" fill="#fefefe" stroke="#1e1e1e" stroke-width="1.5"/><path d="M8.7,0.4 V5.1 A1.25,1.25 0 0 0 9.95,6.35 H14.65" fill="none" stroke="#1e1e1e" stroke-width="1.5"/><rect x="4.2" y="5.4" width="7.4" height="12.4" fill="#fff" stroke="#e3d6d6" stroke-width="0.5"/><rect x="4.8" y="6.1" width="6.2" height="11" fill="#3ba6dd"/><path d="M4.8,13.3 h6.2 v3.8 h-6.2z" fill="#20232b"/><ellipse cx="7.9" cy="10.6" rx="1.6" ry="2.2" fill="#d9a792"/><path d="M7.2,14.4 h1.5 v2.7 h-1.5z" fill="#b83a4c"/></svg>
<div class="t" style="left:29.50px;top:665.00px;font-size:15px;color:#1f1f1f;transform:scaleX(0.947);transform-origin:0 0;">B6B51370C661E9B6E0500C1C10008905?thumb=90x130</div>
<div class="t" style="left:623.20px;top:665.00px;font-size:15px;color:#666666;">200</div>
<div class="t" style="left:809.20px;top:665.00px;font-size:15px;color:#1f1f1f;">png</div>
<div class="t" style="left:995.5px;top:665.00px;font-size:15px;color:#1567c8;text-decoration:underline;text-decoration-skip-ink:none;text-underline-offset:2px;">lawyer?keyWords=&gender=none&practic…</div>
<div class="r" style="left:1409.3px;top:668.28px;width:3px;height:9.6px;border-radius:50%/40%;background:#4a3f5a;opacity:0.9"></div>
<svg style="left:8px;top:687.80px" width="17" height="21" viewBox="0 0 17 21"><path d="M2.9,0.4 H8.7 L14.65,6.35 V17.9 A1.5,1.5 0 0 1 13.15,19.4 H2.95 A1.5,1.5 0 0 1 1.45,17.9 V1.9 A1.5,1.5 0 0 1 2.95,0.4 Z" fill="#fff" stroke="#fff" stroke-width="3" opacity="0.9"/><path d="M2.9,0.4 H8.7 L14.65,6.35 V17.9 A1.5,1.5 0 0 1 13.15,19.4 H2.95 A1.5,1.5 0 0 1 1.45,17.9 V1.9 A1.5,1.5 0 0 1 2.95,0.4 Z" fill="#fefefe" stroke="#1e1e1e" stroke-width="1.5"/><path d="M8.7,0.4 V5.1 A1.25,1.25 0 0 0 9.95,6.35 H14.65" fill="none" stroke="#1e1e1e" stroke-width="1.5"/><rect x="4.2" y="7.4" width="7.4" height="11.4" fill="#fff" stroke="#d7dbe3" stroke-width="0.7"/><path d="M5.3,18.6 V8.7 H11.2" fill="none" stroke="#9a9a9a" stroke-width="0.9"/><rect x="5.9" y="9.3" width="5.2" height="9.2" fill="#d3e2fa"/><path d="M6.6,14.2 L8.6,12.4 M7.2,16.4 L10.4,16.4" stroke="#fff" stroke-width="0.6"/></svg>
<div class="t" style="left:29.50px;top:691.00px;font-size:15px;color:#1f1f1f;transform:scaleX(0.947);transform-origin:0 0;">B6B51370C5A1E9B6E0500C1C10008905?thumb=90x130</div>
<div class="t" style="left:623.20px;top:691.00px;font-size:15px;color:#666666;">302</div>
<div class="t" style="left:809.20px;top:691.00px;font-size:15px;color:#1f1f1f;">octet-stream / 重定向</div>
<div class="t" style="left:995.5px;top:691.00px;font-size:15px;color:#1567c8;text-decoration:underline;text-decoration-skip-ink:none;text-underline-offset:2px;">lawyer?keyWords=&gender=none&practic…</div>
<div class="r" style="left:0px;top:705px;width:1411.00px;height:1.00px;background:#cdd0d4;"></div>
<div class="r" style="left:0px;top:706px;width:1411.00px;height:17.00px;background:#f7f7f7;"></div>
<div class="t" style="left:14.20px;top:718.02px;font-size:15px;color:#1f1f1f;">41</div>
<div class="t" style="left:33.90px;top:718.02px;font-size:15px;color:#1f1f1f;">次请求</div>
<div class="t" style="left:87.80px;top:718.02px;font-size:15px;color:#1f1f1f;">已传输</div>
<div class="t" style="left:131.70px;top:718.02px;font-size:15px;color:#1f1f1f;">395 kB</div>
<div class="t" style="left:193.20px;top:718.02px;font-size:15px;color:#1f1f1f;transform:scaleX(0.83);transform-origin:0 0;">1.6 MB</div>
<div class="t" style="left:236.80px;top:718.02px;font-size:15px;color:#1f1f1f;">条资源</div>
<div class="t" style="left:289.00px;top:718.02px;font-size:15px;color:#1f1f1f;">完成：</div>
<div class="t" style="left:333.40px;top:718.02px;font-size:15px;color:#1f1f1f;">930</div>
<div class="t" style="left:366.90px;top:718.02px;font-size:15px;color:#1f1f1f;">毫秒</div>
<div class="t" style="left:405.90px;top:718.02px;font-size:15px;color:#1a5fc8;">DOMContentLoaded:</div>
<div class="t" style="left:557.80px;top:718.02px;font-size:15px;color:#1a5fc8;">390</div>
<div class="t" style="left:590.20px;top:718.02px;font-size:15px;color:#1a5fc8;">毫秒</div>
<div class="t" style="left:628.50px;top:718.02px;font-size:15px;color:#c0392b;">加载：</div>
<div class="t" style="left:673.90px;top:718.02px;font-size:15px;color:#c0392b;">737</div>
<div class="t" style="left:706.40px;top:718.02px;font-size:15px;color:#c0392b;">毫秒</div>
</body></html>
